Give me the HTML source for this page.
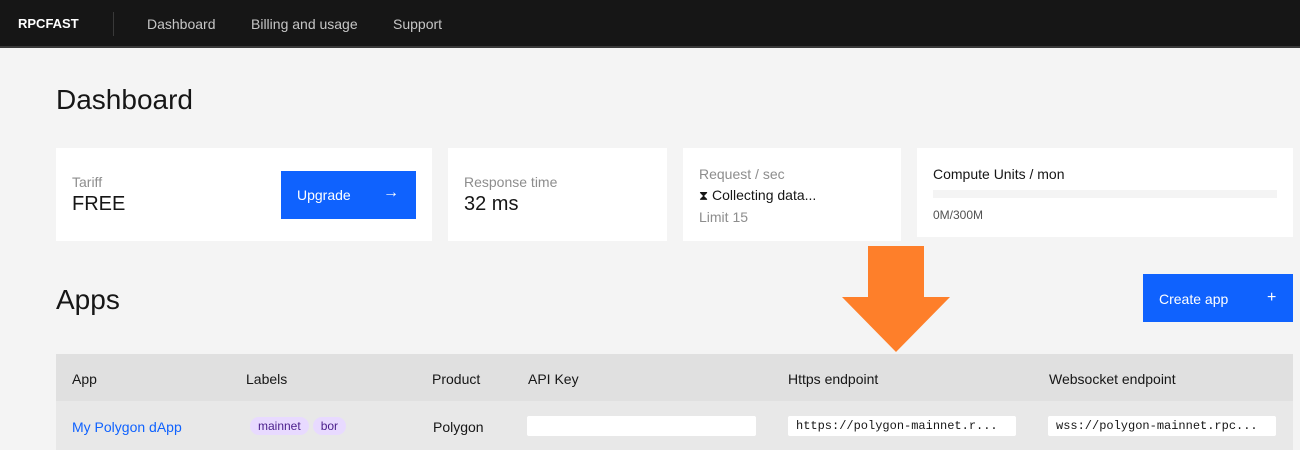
<!DOCTYPE html><html><head><style>
body{margin:0;width:1300px;height:450px;overflow:hidden;background:#f4f4f4;font-family:"Liberation Sans",sans-serif;color:#161616;position:relative}
.a{position:absolute}
.hdr{left:0;top:0;width:1300px;height:46px;background:#161616;border-bottom:2px solid #393939}
.hdr span{position:absolute;top:16px;font-size:14px;color:#c6c6c6}
.card{background:#fff;position:absolute;top:148px;height:93px}
.lbl{font-size:14px;color:#8d8d8d;position:absolute}
.val{font-size:20px;position:absolute}
.tag{background:#e8daff;color:#491d8b;border-radius:10px;padding:2px 8px;font-size:12px;margin-right:4px}
.code{background:#fff;font-family:"Liberation Mono",monospace;font-size:12px;position:absolute;top:416px;height:20px;line-height:20px;padding-left:8px;width:220px;border-radius:2px}
</style></head><body>
<div class="a hdr">
<span style="left:18px;color:#fff;font-weight:bold;font-size:13px">RPCFAST</span>
<div class="a" style="left:113px;top:12px;width:1px;height:24px;background:#393939"></div>
<span style="left:147px">Dashboard</span><span style="left:251px">Billing and usage</span><span style="left:393px">Support</span>
</div>
<div class="a" style="left:56px;top:84px;font-size:28px">Dashboard</div>
<div class="card" style="left:56px;width:376px">
<div class="lbl" style="left:16px;top:26px">Tariff</div><div class="val" style="left:16px;top:45px">FREE</div>
<div class="a" style="left:225px;top:23px;width:135px;height:48px;background:#0f62fe;color:#fff;font-size:14px"><span class="a" style="left:16px;top:16px">Upgrade</span><span class="a" style="left:102px;top:13px;font-size:16px">→</span></div>
</div>
<div class="card" style="left:448px;width:219px"><div class="lbl" style="left:16px;top:26px">Response time</div><div class="val" style="left:16px;top:45px">32 ms</div></div>
<div class="card" style="left:683px;width:218px"><div class="lbl" style="left:16px;top:18px">Request / sec</div><div class="a" style="left:16px;top:39px;font-size:14px"><span style="font-family:'DejaVu Sans';font-size:13px">⧗</span> Collecting data...</div><div class="lbl" style="left:16px;top:61px">Limit 15</div></div>
<div class="card" style="left:917px;width:376px;height:89px"><div class="a" style="left:16px;top:18px;font-size:14px">Compute Units / mon</div><div class="a" style="left:16px;top:42px;width:344px;height:8px;background:#f4f4f4"></div><div class="a" style="left:16px;top:60px;font-size:12px;color:#525252">0M/300M</div></div>
<div class="a" style="left:56px;top:284px;font-size:28px">Apps</div>
<div class="a" style="left:1143px;top:274px;width:150px;height:48px;background:#0f62fe;color:#fff;font-size:14px"><span class="a" style="left:16px;top:17px">Create app</span><span class="a" style="left:124px;top:15px;font-size:16px">+</span></div>
<div class="a" style="left:56px;top:354px;width:1237px;height:47px;background:#e0e0e0"></div>
<div class="a" style="left:56px;top:401px;width:1237px;height:49px;background:#e8e8e8"></div>
<div class="a" style="top:371px;left:72px;font-size:14px;width:1200px;color:#161616">
<span class="a" style="left:0">App</span><span class="a" style="left:174px">Labels</span><span class="a" style="left:360px">Product</span><span class="a" style="left:456px">API Key</span><span class="a" style="left:716px">Https endpoint</span><span class="a" style="left:977px">Websocket endpoint</span></div>
<div class="a" style="left:72px;top:419px;font-size:14px;color:#0f62fe">My Polygon dApp</div>
<div class="a" style="left:250px;top:417px"><span class="tag">mainnet</span><span class="tag">bor</span></div>
<div class="a" style="left:433px;top:419px;font-size:14px">Polygon</div>
<div class="a" style="left:527px;top:416px;width:229px;height:20px;background:#fff;border-radius:2px"></div>
<div class="code" style="left:788px">https://polygon-mainnet.r...</div>
<div class="code" style="left:1048px">wss://polygon-mainnet.rpc...</div>
<svg class="a" style="left:840px;top:246px" width="112" height="108"><polygon points="28,0 84,0 84,51 110,51 56,106 2,51 28,51" fill="#fe7f2a"/></svg>
</body></html>
